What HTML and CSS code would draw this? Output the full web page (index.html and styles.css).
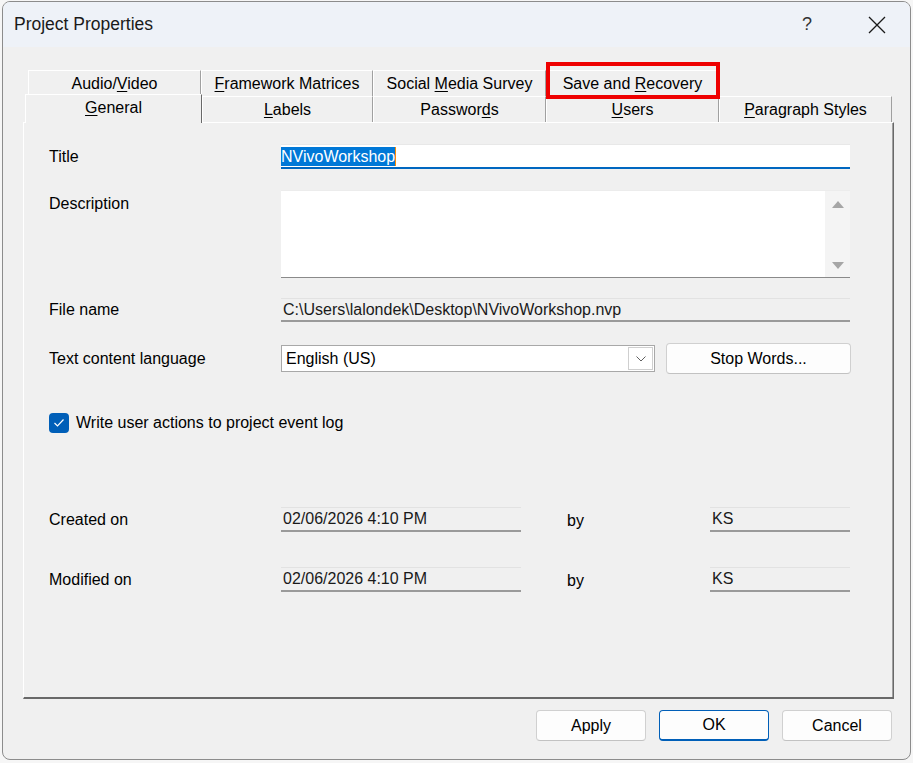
FILE: index.html
```html
<!DOCTYPE html>
<html lang="en">
<head>
    <meta charset="UTF-8">
    <meta name="viewport" content="width=device-width, initial-scale=1.0">
    <title>Project Properties</title>
    <link rel="stylesheet" href="styles.css">
</head>
<body>
    <div class="window">
        <!-- Title bar -->
        <div class="titlebar">
            <span class="title">Project Properties</span>
            <span class="help">?</span>
            <svg class="close" width="18" height="18" viewBox="0 0 18 18">
                <path d="M1 1 L17 17 M17 1 L1 17" stroke="#1a1a1a" stroke-width="1.3" fill="none"/>
            </svg>
        </div>

        <div class="content">
            <!-- Tabs -->
            <div class="tabs">
                <div class="tab-row back">
                    <div class="tab w173"><span>Audio/<u>V</u>ideo</span></div>
                    <div class="tab w172"><span><u>F</u>ramework Matrices</span></div>
                    <div class="tab w173"><span>Social <u>M</u>edia Survey</span></div>
                    <div class="tab w173"><span>Save and <u>R</u>ecovery</span></div>
                </div>
                <div class="tab-row front">
                    <div class="tab selected"><span><u>G</u>eneral</span></div>
                    <div class="tab w171"><span><u>L</u>abels</span></div>
                    <div class="tab w173"><span>Passwor<u>d</u>s</span></div>
                    <div class="tab w173"><span><u>U</u>sers</span></div>
                    <div class="tab w173"><span><u>P</u>aragraph Styles</span></div>
                </div>
                <div class="highlight-box"></div>
            </div>

            <!-- Tab page -->
            <div class="panel">
                <div class="row row-title">
                    <label class="label">Title</label>
                    <div class="input active"><span class="selection">NVivoWorkshop</span></div>
                </div>

                <div class="row row-desc">
                    <label class="label top">Description</label>
                    <div class="textarea">
                        <div class="scrollbar">
                            <svg width="12" height="7" viewBox="0 0 12 7"><path d="M0 7 L6 0 L12 7 Z" fill="#a6a6a6"/></svg>
                            <svg width="12" height="7" viewBox="0 0 12 7"><path d="M0 0 L6 7 L12 0 Z" fill="#a6a6a6"/></svg>
                        </div>
                    </div>
                </div>

                <div class="row row-file">
                    <label class="label">File name</label>
                    <div class="readonly wide">C:\Users\lalondek\Desktop\NVivoWorkshop.nvp</div>
                </div>

                <div class="row row-lang">
                    <label class="label">Text content language</label>
                    <div class="combo">
                        <span>English (US)</span>
                        <div class="combo-btn">
                            <svg width="10" height="6" viewBox="0 0 10 6"><path d="M0.5 0.5 L5 5 L9.5 0.5" stroke="#606060" stroke-width="1" fill="none"/></svg>
                        </div>
                    </div>
                    <button class="btn stop-words">Stop Words...</button>
                </div>

                <div class="row row-check">
                    <span class="checkbox">
                        <svg width="12" height="10" viewBox="0 0 12 10"><path d="M1.5 5 L4.5 8 L10.5 1.5" stroke="#fff" stroke-width="1.2" fill="none"/></svg>
                    </span>
                    <span class="check-label">Write user actions to project event log</span>
                </div>

                <div class="row row-created">
                    <label class="label">Created on</label>
                    <div class="readonly date">02/06/2026 4:10 PM</div>
                    <span class="by">by</span>
                    <div class="readonly user">KS</div>
                </div>

                <div class="row row-modified">
                    <label class="label">Modified on</label>
                    <div class="readonly date">02/06/2026 4:10 PM</div>
                    <span class="by">by</span>
                    <div class="readonly user">KS</div>
                </div>
            </div>

            <!-- Dialog buttons -->
            <div class="buttons">
                <button class="btn">Apply</button>
                <button class="btn default">OK</button>
                <button class="btn">Cancel</button>
            </div>
        </div>
    </div>
</body>
</html>
```

FILE: styles.css
```css
/* General Styles */
* {
    margin: 0;
    padding: 0;
    box-sizing: border-box;
}

body {
    font-family: "Liberation Sans", Arial, sans-serif;
    font-size: 16px;
    color: #000;
    background-color: #f6f6f6;
}

u {
    text-decoration: underline;
    text-underline-offset: 2px;
}

/* Window frame */
.window {
    margin: 1px 0 0 2px;
    width: 909px;
    height: 759px;
    border: 1px solid #8c8c8c;
    border-radius: 8px;
    background-color: #f0f0f0;
    overflow: hidden;
}

/* Title bar */
.titlebar {
    height: 45px;
    background-color: #eef2f8;
    display: flex;
    align-items: center;
    padding-left: 11px;
}

.title {
    font-size: 17.5px;
    color: #1a1a1a;
    flex: 1;
}

.help {
    font-size: 18px;
    color: #333;
    margin-right: 56px;
}

.close {
    margin-right: 24px;
}

.content {
    padding: 23px 0 0 20px;
}

/* Tabs */
.tabs {
    position: relative;
    width: 871px;
}

.tab-row {
    display: flex;
    height: 26px;
}

.tab-row.back {
    padding-left: 5px;
}

.tab-row.front {
    padding-left: 2px;
    position: relative;
    z-index: 1;
}

.tab {
    height: 26px;
    background-color: #f0f0f0;
    border-top: 1px solid #fff;
    border-left: 1px solid #fff;
    border-right: 1px solid #a0a0a0;
    display: flex;
    align-items: center;
    justify-content: center;
    padding-top: 1px;
    white-space: nowrap;
}

.w171 { width: 171px; }
.w172 { width: 172px; }
.w173 { width: 173px; }

.tab.selected {
    width: 177px;
    height: 29px;
    margin-top: -2px;
    padding-bottom: 4px;
    border-right: 1px solid #696969;
}

.highlight-box {
    position: absolute;
    left: 523px;
    top: -8px;
    width: 174px;
    height: 37px;
    border: 4px solid #ee0000;
    z-index: 2;
}

/* Tab page */
.panel {
    width: 871px;
    height: 577px;
    border-top: 1px solid #fff;
    border-left: 1px solid #fff;
    border-right: 1px solid #696969;
    border-bottom: 2px solid #696969;
    box-shadow: inset -1px 0 #a0a0a0;
    padding: 21px 0 0 25px;
}

.row {
    display: flex;
    align-items: center;
}

.label {
    width: 232px;
    flex-shrink: 0;
    line-height: 18px;
}

.label.top {
    align-self: flex-start;
    padding-top: 5px;
}

.row-desc { margin-top: 21px; align-items: flex-start; }
.row-file { margin-top: 20px; }
.row-lang { margin-top: 21px; }
.row-check { margin-top: 39px; }
.row-created { margin-top: 74px; }
.row-modified { margin-top: 35px; }

.input {
    width: 569px;
    height: 25px;
    background-color: #fff;
    border-top: 1px solid #e8e8e8;
    border-bottom: 2px solid #0067c0;
    display: flex;
    align-items: center;
}

.selection {
    background-color: #0078d7;
    color: #fff;
    line-height: 19px;
    border-right: 1px solid #ff8c00;
}

.textarea {
    width: 569px;
    height: 88px;
    background-color: #fff;
    border-top: 1px solid #ececec;
    border-bottom: 1px solid #8a8a8a;
    display: flex;
    justify-content: flex-end;
}

.scrollbar {
    width: 25px;
    background-color: #f4f4f4;
    display: flex;
    flex-direction: column;
    align-items: center;
    justify-content: space-between;
    padding: 10px 0 8px;
}

.readonly {
    height: 25px;
    background-color: #f0f0f0;
    border-top: 1px solid #e2e2e2;
    border-bottom: 2px solid #9a9a9a;
    padding-left: 2px;
    display: flex;
    align-items: center;
    color: #1a1a1a;
}

.readonly.wide { width: 569px; height: 24px; }
.readonly.date { width: 240px; }
.readonly.user { width: 140px; }

.by {
    width: 189px;
    padding-left: 46px;
    padding-top: 2px;
}

.combo {
    width: 374px;
    height: 27px;
    background-color: #fff;
    border: 1px solid #a8a8a8;
    display: flex;
    align-items: center;
    justify-content: space-between;
    padding: 0 1px 0 4px;
}

.combo-btn {
    width: 25px;
    height: 23px;
    border: 1px solid #cfcfcf;
    display: flex;
    align-items: center;
    justify-content: center;
}

/* Buttons */
.btn {
    font-family: inherit;
    font-size: 16px;
    color: #000;
    background-color: #fdfdfd;
    border: 1px solid #d0d0d0;
    border-bottom-color: #c2c2c2;
    border-radius: 4px;
    height: 31px;
    width: 110px;
}

.btn.stop-words {
    width: 185px;
    margin-left: 11px;
}

.btn.default {
    border: 1px solid #005fb8;
    border-bottom-width: 2px;
}

.buttons {
    display: flex;
    justify-content: flex-end;
    gap: 13px;
    padding: 11px 18px 0 0;
}

/* Checkbox */
.checkbox {
    width: 20px;
    height: 20px;
    background-color: #005fb8;
    border-radius: 4px;
    display: flex;
    align-items: center;
    justify-content: center;
}

.check-label {
    margin-left: 7px;
}
```
